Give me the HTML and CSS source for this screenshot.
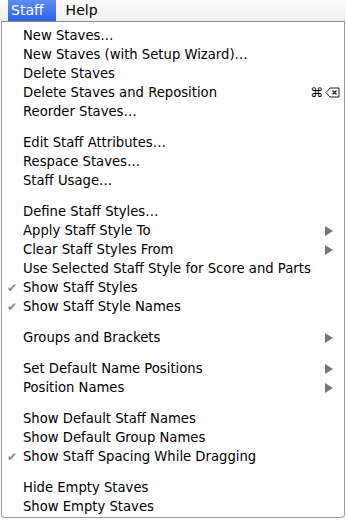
FILE: index.html
```html
<!DOCTYPE html>
<html lang="en">
<head>
    <meta charset="UTF-8">
    <title>Staff menu</title>
    <link rel="stylesheet" href="styles.css">
</head>
<body>
    <div class="menubar">
        <span class="menu-title active">Staff</span>
        <span class="menu-title">Help</span>
    </div>

    <div class="menu">
        <div class="item">New Staves…</div>
        <div class="item">New Staves (with Setup Wizard)…</div>
        <div class="item">Delete Staves</div>
        <div class="item">Delete Staves and Reposition<span class="shortcut">⌘<svg width="15" height="11" viewBox="0 0 15 11"><path d="M5 1 H14 V10 H5 L1 5.5 Z" fill="none" stroke="#222" stroke-width="1"/><path d="M7.5 3.5 L11.5 7.5 M11.5 3.5 L7.5 7.5" stroke="#222" stroke-width="1.3"/></svg></span></div>
        <div class="item">Reorder Staves…</div>
        <div class="sep"></div>
        <div class="item">Edit Staff Attributes…</div>
        <div class="item">Respace Staves…</div>
        <div class="item">Staff Usage…</div>
        <div class="sep"></div>
        <div class="item">Define Staff Styles…</div>
        <div class="item sub">Apply Staff Style To</div>
        <div class="item sub">Clear Staff Styles From</div>
        <div class="item">Use Selected Staff Style for Score and Parts</div>
        <div class="item checked">Show Staff Styles</div>
        <div class="item checked">Show Staff Style Names</div>
        <div class="sep"></div>
        <div class="item sub">Groups and Brackets</div>
        <div class="sep"></div>
        <div class="item sub">Set Default Name Positions</div>
        <div class="item sub">Position Names</div>
        <div class="sep"></div>
        <div class="item">Show Default Staff Names</div>
        <div class="item">Show Default Group Names</div>
        <div class="item checked">Show Staff Spacing While Dragging</div>
        <div class="sep"></div>
        <div class="item">Hide Empty Staves</div>
        <div class="item">Show Empty Staves</div>
    </div>
</body>
</html>
```

FILE: styles.css
```css
body {
    margin: 0;
    padding: 0;
    background: #fff;
    font-family: "DejaVu Sans", "Liberation Sans", sans-serif;
    font-size: 13.2px;
    color: #000;
}

.menubar {
    display: flex;
    height: 21px;
    padding-left: 8px;
    background: linear-gradient(#fdfdfd, #f0f0f0);
}

.menu-title {
    display: flex;
    align-items: center;
    padding: 0 12px 0 3px;
    line-height: 21px;
    font-size: 14px;
}

.menu-title + .menu-title {
    margin-left: 7px;
}

.menu-title.active {
    color: #fff;
    background: linear-gradient(#5f8df5, #2a62e8);
}

.menu {
    margin-left: 1px;
    width: 344px;
    height: 497px;
    box-sizing: border-box;
    padding-top: 4px;
    border: 1px solid #9a9a9a;
    border-top-color: #8a8a8a;
    border-radius: 0 0 4px 4px;
    background: #fff;
}

.item {
    position: relative;
    display: flex;
    align-items: center;
    height: 19px;
    padding-left: 21px;
    white-space: nowrap;
}

.sep {
    height: 12px;
}

.checked::before {
    content: "✔";
    position: absolute;
    left: 5px;
    color: #8a8a8a;
    font-size: 12px;
}

.sub::after {
    content: "";
    position: absolute;
    right: 11px;
    top: 5px;
    border-left: 8px solid #777;
    border-top: 5px solid transparent;
    border-bottom: 5px solid transparent;
}

.shortcut {
    margin-left: auto;
    margin-right: 4px;
    display: flex;
    align-items: center;
    gap: 2px;
    font-size: 13px;
}
```
